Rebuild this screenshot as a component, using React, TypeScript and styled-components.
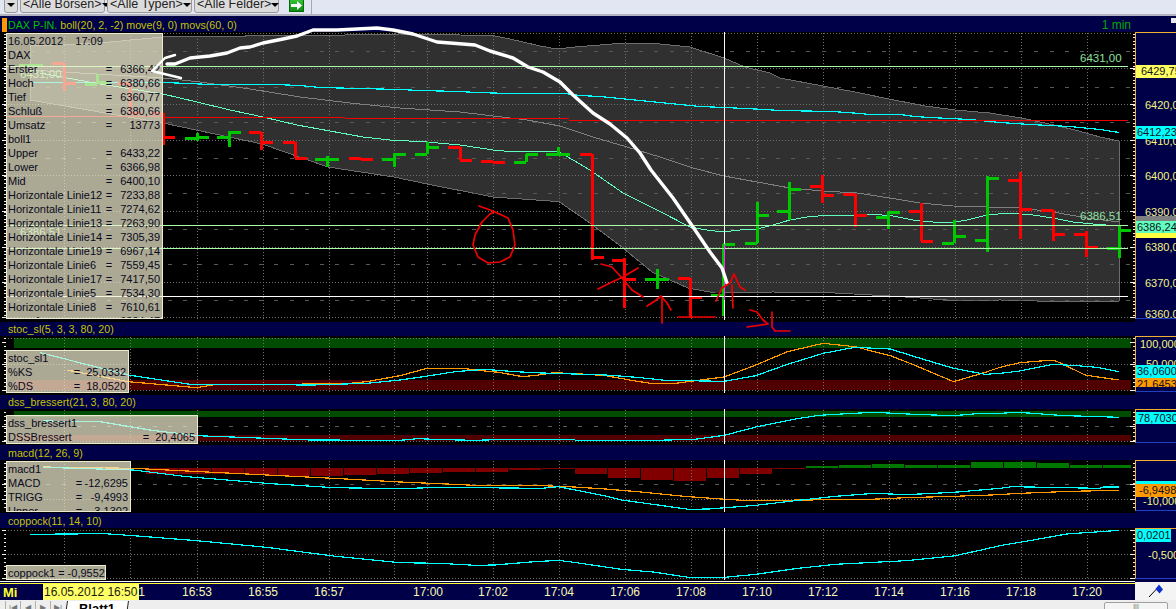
import styled, { createGlobalStyle } from 'styled-components';

type Pt = number[];

const GlobalStyle = createGlobalStyle`
    html, body {
        margin: 0;
        padding: 0;
        background: #000048;
    }
`;

const FONT = `"Liberation Sans", Arial, sans-serif`;
const GRID_X = [64, 130, 197, 263, 329, 394, 427, 493, 559, 625, 691, 757, 823, 889, 955, 1021, 1087];
const CROSS_X = 724.5;
const CYAN = '#00ffff';
const ORANGE = '#ff9900';
const MINT = '#60ffc0';
const PALE = '#a8ffa8';

// values were read off zoomed crops, so convert them back to page coordinates
const wide = (list: Pt[]) => list.map(([x, y]) => [400 + x / 2.529, 335 + y / 3]);
const right = (list: Pt[]) => list.map(([x, y]) => [1000 + x / 3, 330 + y / 3]);
const left = (list: Pt[]) => list.map(([x, y]) => [x / 3, 340 + y / 3]);
const points = (list: Pt[]) => list.map((p) => p.join(',')).join(' ');

const Page = styled.div`
    position: relative;
    width: 1176px;
    height: 609px;
    overflow: hidden;
    background: #000048;
    font-family: ${FONT};
    display: flex;
    flex-direction: column;
`;

const Toolbar = styled.div`
    flex: none;
    height: 14px;
    box-sizing: content-box;
    padding-left: 4px;
    display: flex;
    align-items: flex-end;
    gap: 2px;
    overflow: hidden;
    background: #e2e5f2;
    border-bottom: 2px solid #b4b4c0;
    margin-bottom: 2px;
`;

const Dropdown = styled.div<{ $w: number }>`
    flex: none;
    width: ${(p) => p.$w}px;
    height: 20px;
    margin-bottom: 1px;
    box-sizing: border-box;
    padding: 0 3px 0 2px;
    display: flex;
    align-items: flex-end;
    justify-content: space-between;
    background: #dcdcdc;
    border: 1px solid #9a9a9a;
    border-radius: 3px;
    color: #222;
    font-size: 12.5px;
    line-height: 12px;
    white-space: nowrap;
    span:first-child {
        position: relative;
        top: -2px;
    }
`;

const Caret = styled.i`
    flex: none;
    width: 0;
    height: 0;
    margin-bottom: 5px;
    border-left: 4px solid transparent;
    border-right: 4px solid transparent;
    border-top: 4px solid #000;
`;

const GoButton = styled.div`
    flex: none;
    width: 15px;
    height: 13px;
    margin: 0 5px 2px 8px;
    display: flex;
    align-items: center;
    justify-content: center;
    background: linear-gradient(#36c236, #0d8f12);
    border: 1px solid #0a6a0a;
    box-sizing: border-box;
`;

const ToolbarRule = styled.div`
    flex: none;
    width: 1px;
    height: 14px;
    background: #a8a8b4;
`;

const PaneHeader = styled.div<{ $h: number }>`
    flex: none;
    height: ${(p) => p.$h}px;
    position: relative;
    display: flex;
    align-items: center;
    padding-left: 8px;
    background: #000048;
    color: #c4c400;
    font-size: 10.7px;
    white-space: pre;
`;

const HeaderMark = styled.i`
    position: absolute;
    left: 2px;
    top: 0;
    width: 5px;
    height: 14px;
    background: #ff9900;
`;

const Instrument = styled.span`
    color: #00c000;
    margin-right: 3px;
`;

const TimeFrame = styled.span`
    margin-left: auto;
    margin-right: 45px;
    color: #00a800;
    font-size: 12px;
`;

const HeaderGrip = styled.i`
    position: absolute;
    right: 0;
    top: 0;
    width: 5px;
    height: 5px;
    background: #e8e8e8;
`;

const PaneBody = styled.div<{ $h: number }>`
    flex: none;
    height: ${(p) => p.$h}px;
    position: relative;
    display: flex;
    background: #000;
`;

const Plot = styled.svg`
    flex: none;
    display: block;
    width: 1135px;
    height: 100%;
`;

const Axis = styled.div<{ $h: number }>`
    flex: none;
    width: 41px;
    height: ${(p) => p.$h}px;
    box-sizing: border-box;
    position: relative;
    overflow: hidden;
    background: #000048;
    border-left: 1px solid #f0b030;
    border-top: 1px solid #f0b030;
    border-bottom: 1px solid #2040c0;
    box-shadow: 0 3px 0 #000048;
`;

const AxisLabel = styled.div<{ $top: number; $left: number }>`
    position: absolute;
    top: ${(p) => p.$top}px;
    left: ${(p) => p.$left}px;
    color: #f4f480;
    font-size: 11px;
    line-height: 14px;
    white-space: nowrap;
`;

const AxisTag = styled.div<{ $top: number; $bg: string; $h?: number; $w?: number; $pad?: number }>`
    position: absolute;
    top: ${(p) => p.$top}px;
    left: 0;
    width: ${(p) => p.$w ?? 40}px;
    height: ${(p) => p.$h ?? 13}px;
    padding-left: ${(p) => p.$pad ?? 1}px;
    box-sizing: border-box;
    overflow: hidden;
    background: ${(p) => p.$bg};
    color: #10101c;
    font-size: 11px;
    line-height: 13px;
    white-space: nowrap;
`;

const Legend = styled.div<{ $top: number; $w: number; $h: number }>`
    position: absolute;
    left: 6px;
    top: ${(p) => p.$top}px;
    width: ${(p) => p.$w}px;
    height: ${(p) => p.$h}px;
    box-sizing: border-box;
    overflow: hidden;
    padding: 0 2px 0 1px;
    border: 1px solid #ecebd0;
    background: rgba(243, 240, 210, 0.7);
    color: #0a0a20;
    font-size: 11px;
    line-height: 14px;
`;

const LegendRow = styled.div<{ $value: number; $eq?: number }>`
    display: grid;
    grid-template-columns: 1fr ${(p) => p.$eq ?? 10}px ${(p) => p.$value}px;
    height: 14px;
    white-space: nowrap;
    b {
        font-weight: normal;
        text-align: center;
    }
    em {
        font-style: normal;
        text-align: right;
    }
`;

const BottomAxis = styled.div`
    flex: none;
    height: 19px;
    display: flex;
`;

const TimeScale = styled.div`
    position: relative;
    flex: none;
    width: 1135px;
    box-sizing: border-box;
    padding: 3px 0 0 115px;
    display: flex;
    background: #000048;
    border-top: 1px solid #ffffff;
    box-shadow: inset 0 1px 0 #000048, inset 0 2px 0 #ffff30;
    color: #f8f8b0;
    font-size: 12px;
    line-height: 15px;
`;

const DayName = styled.b`
    position: absolute;
    left: 3px;
    top: 3px;
    color: #ffff30;
    font-size: 13px;
`;

const DateBox = styled.div`
    position: absolute;
    left: 43px;
    top: 2px;
    width: 96px;
    height: 16px;
    padding-left: 1px;
    box-sizing: border-box;
    background: #ffff66;
    color: #1c1c10;
    font-size: 12px;
    line-height: 16px;
`;

const TimeCell = styled.span<{ $w: number }>`
    flex: none;
    width: ${(p) => p.$w}px;
`;

const PenBox = styled.div`
    flex: 1;
    display: flex;
    align-items: center;
    justify-content: center;
    background: #f4f4f4;
`;

const SheetBar = styled.div`
    flex: none;
    height: 9px;
    display: flex;
    align-items: flex-start;
    padding: 1px 8px 0 5px;
    background: #eeeeee;
    overflow: hidden;
`;

const SheetNav = styled.div`
    flex: none;
    width: 15px;
    height: 14px;
    display: flex;
    justify-content: center;
    padding-top: 2px;
    box-sizing: border-box;
    border-left: 1px solid #b0b0b0;
    color: #777;
    font-size: 8px;
    line-height: 9px;
`;

const SheetTab = styled.div`
    flex: none;
    width: 60px;
    margin-left: 1px;
    padding-top: 1px;
    border-left: 1px solid #222;
    border-right: 1px solid #222;
    transform: skewX(-8deg);
    text-align: center;
    color: #000;
    font-size: 13px;
    font-weight: bold;
    line-height: 13px;
    background: #fff;
    span {
        display: inline-block;
        transform: skewX(8deg);
    }
`;

const SheetScroll = styled.div`
    margin-left: auto;
    flex: none;
    width: 64px;
    height: 14px;
    margin-top: 1px;
    text-align: center;
    box-sizing: border-box;
    border: 1px solid #a0a0a0;
    border-radius: 2px;
    background: #f4f4f4;
    color: #555;
    font-size: 7px;
    line-height: 7px;
`;

const Overlay = styled.svg`
    position: absolute;
    left: 0;
    top: 0;
    width: 1176px;
    height: 609px;
    pointer-events: none;
`;

const range = (from: number, to: number, step: number) => {
    const out: number[] = [];
    for (let v = from; v <= to; v += step) out.push(v);
    return out;
};

const Grid = ({ top, bottom, dotted, dashed }: { top: number; bottom: number; dotted: number[]; dashed: number[] }) => (
    <g shapeRendering="crispEdges">
        {GRID_X.map((x) => (
            <line key={x} x1={x + 0.5} x2={x + 0.5} y1={top} y2={bottom} stroke="#707070" strokeDasharray="1 2" />
        ))}
        {dotted.map((y) => (
            <line key={y} x1={8} x2={1131} y1={y + 0.5} y2={y + 0.5} stroke="#707070" strokeDasharray="1 2" />
        ))}
        {dashed.map((y) => (
            <line key={y} x1={16} x2={1131} y1={y + 0.5} y2={y + 0.5} stroke="#585858" strokeDasharray="4 11.2" />
        ))}
    </g>
);

const EdgeTicks = ({ top, bottom, step, major }: { top: number; bottom: number; step: number; major: number[] }) => (
    <g shapeRendering="crispEdges" stroke="#f0f0f0">
        {range(top, bottom, step).map((y) => (
            <g key={y}>
                <line x1={4} x2={6} y1={y} y2={y} />
                <line x1={1133} x2={1135} y1={y} y2={y} />
            </g>
        ))}
        {major.map((y) => (
            <g key={y}>
                <line x1={2} x2={6} y1={y + 0.5} y2={y + 0.5} />
                <line x1={1130} x2={1135} y1={y + 0.5} y2={y + 0.5} />
            </g>
        ))}
    </g>
);

const Cross = ({ top, bottom }: { top: number; bottom: number }) => (
    <line x1={CROSS_X} x2={CROSS_X} y1={top} y2={bottom} stroke="#f8f8f8" strokeWidth={1} shapeRendering="crispEdges" />
);

const Trace = ({ data, color, width = 1.2 }: { data: Pt[]; color: string; width?: number }) => (
    <polyline points={points(data)} fill="none" stroke={color} strokeWidth={width} shapeRendering="crispEdges" />
);

const bandTop: Pt[] = [[30, 46], [100, 43], [163, 37], [178, 36], [245, 36], [245, 35], [345, 35], [400, 34], [460, 35], [495, 36], [510, 39], [540, 46], [557, 49], [575, 47], [600, 45], [625, 43], [660, 44], [690, 47], [724, 58], [745, 67], [770, 73], [780, 78], [823, 86], [855, 92], [889, 99], [925, 106], [955, 110], [990, 113], [1021, 118], [1045, 123], [1075, 130], [1100, 137], [1119, 141]];
const bandBottom: Pt[] = [[1119, 301], [1070, 302], [1037, 301], [1000, 300], [960, 301], [920, 298], [890, 296], [835, 293], [773, 292], [724, 293], [715, 293], [688, 288], [652, 272], [623, 248], [590, 223], [558, 201], [550, 201], [493, 197], [427, 184], [394, 177], [328, 167], [262, 144], [163, 123], [30, 100]];
const bollMid: Pt[] = [[30, 70], [163, 78], [200, 82], [250, 89], [300, 97], [350, 103], [400, 108], [460, 112], [493, 116], [527, 120], [560, 126], [593, 137], [627, 147], [660, 157], [693, 168], [724, 176], [757, 182], [790, 188], [823, 191], [857, 193], [890, 198], [920, 203], [953, 206], [987, 207], [1020, 208], [1053, 212], [1087, 218], [1119, 222]];
const moveLine: Pt[] = [[33, 82.5], [163, 82.5], [190, 83.5], [210, 84.5], [275, 84.5], [300, 85.5], [320, 87.5], [360, 88.5], [400, 89.5], [420, 90.5], [460, 91.5], [476, 92.5], [510, 93.5], [565, 93.5], [580, 95.5], [600, 96.5], [620, 98.5], [640, 100.5], [660, 102.5], [680, 104.5], [700, 106.5], [724, 107.5], [745, 108.5], [765, 109.5], [780, 110.5], [832, 111.5], [860, 113.5], [870, 114.5], [900, 114.5], [915, 116.5], [930, 117.5], [950, 118.5], [970, 119.5], [1000, 122.5], [1030, 124.5], [1050, 125.5], [1070, 126.5], [1080, 127.5], [1100, 129.5], [1119, 132.5]];
const movsLine: Pt[] = [[40, 73], [100, 84], [163, 94], [197, 102], [230, 110], [263, 117], [297, 125], [330, 131], [363, 137], [390, 140], [427, 142], [460, 145], [480, 148], [493, 150], [509, 151.5], [558, 151.5], [573, 160], [590, 170], [623, 193], [657, 210], [690, 227], [707, 230], [723, 232], [740, 230], [757, 229], [773, 225], [790, 220], [807, 217], [823, 215.5], [853, 215.5], [873, 214.5], [890, 215.5], [913, 220], [933, 222], [950, 223], [967, 220], [987, 215], [1010, 213], [1033, 215], [1053, 218], [1073, 222], [1093, 224], [1119, 226]];
// the red level steps down a pixel at a time: x from, x to, y
const redLevel: number[][] = [[6, 163, 116.5], [163, 345, 117.5], [345, 569, 118.5], [569, 1128, 120.5]];

// x, open, close, high, low
const greenBars: number[][] = [
    [31, 65, 65, 65, 65], [97, 84, 82, 74, 84], [197, 138, 137, 133, 141], [229, 137, 132, 131, 147], [327, 159, 159, 156, 167],
    [394, 159, 154, 153, 167], [427, 154, 147, 142, 154], [526, 162, 154, 154, 162], [558, 154, 154, 147, 155], [657, 279, 279, 269, 289],
    [723, 295, 244, 244, 316], [757, 243, 215, 202, 243], [789, 211, 189, 182, 220], [888, 217, 212, 212, 229], [954, 243, 236, 220, 243],
    [987, 240, 178, 176, 252], [1119, 248, 230, 226, 258],
];
const redBars: number[][] = [
    [64, 63, 83, 63, 91], [130, 83, 113, 83, 115], [163, 113, 137, 113, 145], [261, 132, 142, 132, 150], [295, 142, 158, 142, 158],
    [361, 158, 159, 158, 159], [460, 147, 160, 147, 160], [493, 161, 162, 161, 162], [592, 154, 257, 154, 260], [624, 260, 279, 258, 308],
    [690, 278, 297, 278, 318], [822, 186, 195, 175, 203], [855, 194, 215, 194, 227], [921, 211, 241, 203, 241], [1020, 180, 209, 172, 239],
    [1053, 210, 234, 210, 241], [1086, 234, 247, 231, 257],
];

const Bars = ({ data, color }: { data: number[][]; color: string }) => (
    <g stroke={color} strokeWidth={3} shapeRendering="crispEdges">
        {data.map(([x, open, close, high, low]) => (
            <g key={x}>
                <line x1={x} x2={x} y1={high} y2={low} />
                <line x1={x - 12} x2={x} y1={open} y2={open} />
                <line x1={x} x2={x + 12} y1={close} y2={close} />
            </g>
        ))}
    </g>
);

const macdBars: number[][] = [
    [146, 474], [179, 474], [212, 474], [245, 475], [278, 476], [311, 476], [344, 475], [377, 474], [410, 473], [443, 472],
    [476, 472], [509, 470], [542, 469], [575, 474], [608, 478], [641, 480], [674, 481], [707, 478], [740, 474], [773, 469],
    [806, 466], [839, 465], [872, 464], [905, 465], [938, 465], [971, 462], [1004, 462], [1037, 463], [1070, 465], [1103, 465],
];

const stocOrange = [
    ...left([[200, 90], [385, 125], [590, 143], [650, 133], [1030, 132], [1100, 125]]),
    ...wide([[0, 122], [65, 101], [165, 101], [190, 105], [250, 112], [310, 125], [345, 121], [390, 113], [460, 117], [520, 122], [600, 139], [640, 146], [690, 146], [760, 135], [820, 126], [900, 90], [980, 50], [1070, 25], [1150, 35], [1240, 62], [1300, 90], [1400, 140], [1480, 112]]),
    ...right([[0, 112], [60, 98], [135, 92], [165, 92], [190, 103], [255, 135], [300, 142], [358, 150]]),
];
const stocCyan = [
    ...left([[120, 38], [385, 105], [570, 133], [940, 135], [1100, 130]]),
    ...wide([[0, 135], [65, 124], [140, 110], [215, 103], [290, 110], [360, 114], [520, 120], [600, 127], [670, 136], [820, 139], [900, 122], [980, 88], [1070, 55], [1150, 37], [1240, 42], [1310, 68], [1400, 100], [1480, 118]]),
    ...right([[0, 130], [60, 123], [160, 103], [230, 107], [290, 112], [358, 125]]),
];
const dssCyan = [
    ...left([[130, 243], [300, 245], [450, 270], [590, 287], [800, 295], [930, 300]]),
    ...wide([[0, 316], [45, 311], [110, 314], [190, 316], [275, 313], [440, 313], [445, 317], [610, 317], [745, 313], [820, 301], [900, 276], [1000, 252], [1060, 241], [1130, 236], [1200, 232], [1300, 238], [1400, 242], [1470, 235]]),
    ...right([[0, 250], [50, 247], [100, 250], [150, 254], [200, 257], [300, 260], [358, 262]]),
];
const macdOrange = [
    ...left([[130, 381], [400, 385], [560, 393], [800, 405], [1000, 415]]),
    ...wide([[0, 441], [100, 446], [190, 451], [360, 452], [440, 456], [520, 462], [600, 470], [720, 484], [800, 491], [880, 497], [1020, 495], [1190, 493], [1280, 488], [1400, 484]]),
    ...right([[0, 494], [40, 491], [110, 488], [210, 484], [310, 482], [358, 481]]),
];
const macdCyan = [
    ...left([[130, 382], [400, 390], [560, 410], [800, 430], [1000, 443]]),
    ...wide([[0, 461], [100, 457], [360, 460], [400, 455], [520, 483], [560, 495], [640, 508], [730, 523], [780, 522], [900, 511], [1000, 497], [1100, 484], [1200, 475], [1280, 479], [1400, 472]]),
    ...right([[0, 475], [35, 470], [300, 475], [310, 471], [358, 471]]),
];
const coppockCyan = [
    ...left([[90, 583], [315, 581], [400, 587], [590, 602], [800, 622], [1000, 648]]),
    ...wide([[0, 683], [100, 685], [190, 691], [240, 690], [330, 681], [400, 676], [440, 682], [560, 703], [640, 711], [730, 727], [820, 727], [900, 718], [1000, 701], [1100, 688], [1280, 677], [1400, 663], [1470, 645]]),
    ...right([[0, 647], [100, 630], [200, 612], [358, 601]]),
];

const mainRows: [string, string][] = [
    ['Erster', '6366,42'], ['Hoch', '6380,66'], ['Tief', '6360,77'], ['Schluß', '6380,66'], ['Umsatz', '13773'],
];
const mainLevels: [string, string][] = [
    ['Upper', '6433,22'], ['Lower', '6366,98'], ['Mid', '6400,10'], ['Horizontale Linie12', '7233,88'], ['Horizontale Linie11', '7274,62'],
    ['Horizontale Linie13', '7263,90'], ['Horizontale Linie14', '7305,39'], ['Horizontale Linie19', '6967,14'], ['Horizontale Linie6', '7559,45'],
    ['Horizontale Linie17', '7417,50'], ['Horizontale Linie5', '7534,30'], ['Horizontale Linie8', '7610,61'], ['move1', '6384,47'],
];

const times: [string, number][] = [
    ['16:51', 67], ['16:53', 66], ['16:55', 66], ['16:57', 99], ['17:00', 65], ['17:02', 66], ['17:04', 66], ['17:06', 66],
    ['17:08', 66], ['17:10', 66], ['17:12', 66], ['17:14', 66], ['17:16', 66], ['17:18', 66], ['17:20', 66],
];

const Row = ({ name, value, width = 46 }: { name: string; value: string; width?: number }) => (
    <LegendRow $value={width}>
        <span>{name}</span>
        <b>=</b>
        <em>{value}</em>
    </LegendRow>
);

const MainPlot = () => (
    <Plot viewBox="0 32 1135 290" preserveAspectRatio="none">
        <polygon points={points([...bandTop, ...bandBottom])} fill="#303030" stroke="#6c6c6c" shapeRendering="crispEdges" />
        <Grid top={33} bottom={320} dotted={[33, 68, 104, 140, 175, 211, 247, 282, 317]} dashed={[51, 87, 122, 158, 193, 229, 264, 300]} />
        <EdgeTicks top={34} bottom={318} step={3.56} major={[68, 104, 140, 175, 211, 247, 282, 317]} />
        <Trace data={bollMid} color="#808080" width={1} />
        <Trace data={moveLine} color={CYAN} />
        <Trace data={movsLine} color={MINT} width={1} />
        <g stroke="#f00000" strokeWidth={1} shapeRendering="crispEdges">
            {redLevel.map(([from, to, y]) => <line key={from} x1={from} x2={to} y1={y} y2={y} />)}
        </g>
        <Bars data={redBars} color="#ff0000" />
        <Bars data={greenBars} color="#00c800" />
        <g shapeRendering="crispEdges" strokeWidth={1}>
            <line x1={6} x2={1128} y1={66.5} y2={66.5} stroke={PALE} />
            <line x1={6} x2={1128} y1={225.5} y2={225.5} stroke={PALE} />
            <line x1={6} x2={1128} y1={248.5} y2={248.5} stroke={PALE} />
            <line x1={6} x2={1128} y1={296.5} y2={296.5} stroke="#ffffff" />
        </g>
        <g fill="#8fe0a0" fontFamily={FONT} fontSize={11.5}>
            <text x={1080} y={62}>6431,00</text>
            <text x={1080} y={220}>6386,51</text>
            <text x={20} y={78}>6431,00</text>
            <text x={20} y={236}>6386,51</text>
        </g>
        <Cross top={32} bottom={244} />
        <line x1={CROSS_X} x2={CROSS_X} y1={244} y2={300} stroke="#ff30ff" strokeWidth={1.5} shapeRendering="crispEdges" />
        <Cross top={300} bottom={320} />
    </Plot>
);

const ToolbarRow = () => (
    <Toolbar>
        <Dropdown $w={14}><Caret /></Dropdown>
        <Dropdown $w={85}><span>&lt;Alle Börsen&gt;</span><Caret /></Dropdown>
        <Dropdown $w={85}><span>&lt;Alle Typen&gt;</span><Caret /></Dropdown>
        <Dropdown $w={85}><span>&lt;Alle Felder&gt;</span><Caret /></Dropdown>
        <GoButton>
            <svg width="11" height="9" viewBox="0 0 11 9">
                <path d="M0 3h6V0l5 4.5L6 9V6H0z" fill="#fff" />
            </svg>
        </GoButton>
        <ToolbarRule />
    </Toolbar>
);

const Annotations = () => (
    <Overlay viewBox="0 0 1176 609">
        <g fill="none" stroke="#ffffff" strokeLinecap="round" strokeLinejoin="round">
            <path strokeWidth={2.4} d="M175 55 165 58 152 71 181 78" />
            <polyline strokeWidth={3.4} points="167,64 175,64 190,58 210,56 227,53 240,48 250,47 263,43 283,39 297,36 313,30 337,30 357,29 377,28 393,30 413,34 437,42 450,43 475,45 490,51 513,58 528,67 543,72 560,82 573,95 593,113 610,124 627,138 640,153 651,170 673,198 693,227 710,252 722,268 727,283" />
        </g>
        <g fill="none" stroke="#f00000" strokeWidth={1.7} strokeLinecap="round" strokeLinejoin="round">
            <polyline points="479,206 493,211 508,218 513,230 515,245 510,257 500,262 488,263 478,257 473,245 475,235 482,222 490,214 494,212" />
            <polyline points="601,264 612,267 622,278 632,290 643,297" />
            <polyline points="598,289 612,282 623,277 638,268" />
            <polyline points="647,306 655,301 661,296 667,303 671,310" />
            <polyline points="662,298 662,323" />
            <polyline points="678,317 715,317" />
            <polyline points="716,301 722,288 730,283 734,274 740,287 745,290" />
            <polyline points="732,285 733,308" />
            <polyline points="750,310 757,312 763,320 768,324 747,327" />
            <polyline points="772,312 772,327 775,331 790,331" />
        </g>
    </Overlay>
);

export default function App() {
    return (
        <Page>
            <GlobalStyle />
            <ToolbarRow />

            <PaneHeader $h={14}>
                <HeaderMark />
                <Instrument>DAX P-IN.</Instrument>
                boll(20, 2, -2) move(9, 0) movs(60, 0)
                <TimeFrame>1 min</TimeFrame>
                <HeaderGrip />
            </PaneHeader>
            <PaneBody $h={290}>
                <MainPlot />
                <Axis $h={287}>
                    <AxisTag $top={32} $bg="#ffff60" $pad={5}>6429,75</AxisTag>
                    <AxisLabel $top={65} $left={9}>6420,00</AxisLabel>
                    <AxisLabel $top={101} $left={9}>6410,00</AxisLabel>
                    <AxisTag $top={93} $bg={CYAN}>6412,23</AxisTag>
                    <AxisLabel $top={136} $left={9}>6400,00</AxisLabel>
                    <AxisLabel $top={172} $left={9}>6390,00</AxisLabel>
                    <AxisTag $top={183} $bg="#808080" $h={6}> </AxisTag>
                    <AxisTag $top={199} $bg="#ffff40" $h={6}><span /></AxisTag>
                    <AxisTag $top={188} $bg={MINT} $h={12}>6386,24</AxisTag>
                    <AxisLabel $top={207} $left={9}>6380,00</AxisLabel>
                    <AxisLabel $top={243} $left={9}>6370,00</AxisLabel>
                    <AxisLabel $top={274} $left={9}>6360,00</AxisLabel>
                </Axis>
                <Legend $top={1} $w={157} $h={286}>
                    <LegendRow $value={0} $eq={0}><span>16.05.2012&nbsp;&nbsp;&nbsp;&nbsp;17:09</span></LegendRow>
                    <LegendRow $value={0} $eq={0}><span>DAX</span></LegendRow>
                    {mainRows.map(([name, value]) => <Row key={name} name={name} value={value} />)}
                    <LegendRow $value={0} $eq={0}><span>boll1</span></LegendRow>
                    {mainLevels.map(([name, value]) => <Row key={name} name={name} value={value} />)}
                </Legend>
            </PaneBody>

            <PaneHeader $h={14}>stoc_sl(5, 3, 3, 80, 20)</PaneHeader>
            <PaneBody $h={59}>
                <Plot viewBox="0 336 1135 59" preserveAspectRatio="none">
                    <g shapeRendering="crispEdges">
                        <rect x={14} y={338} width={1117} height={10} fill="#004c00" />
                        <rect x={14} y={380} width={1117} height={10} fill="#500000" />
                    </g>
                    <Grid top={337} bottom={394} dotted={[338, 364, 390]} dashed={[]} />
                    <EdgeTicks top={338} bottom={392} step={4} major={[342, 364, 390]} />
                    <Trace data={stocOrange} color={ORANGE} />
                    <Trace data={stocCyan} color={CYAN} />
                    <Cross top={336} bottom={393} />
                </Plot>
                <Axis $h={56}>
                    <AxisLabel $top={0} $left={4}>100,000</AxisLabel>
                    <AxisLabel $top={20} $left={10}>50,000</AxisLabel>
                    <AxisTag $top={41} $bg={ORANGE} $h={9}>21,6453</AxisTag>
                    <AxisTag $top={28} $bg={CYAN}>36,0600</AxisTag>
                </Axis>
                <Legend $top={14} $w={123} $h={43}>
                    <LegendRow $value={0} $eq={0}><span>stoc_sl1</span></LegendRow>
                    <Row name="%KS" value="25,0332" width={44} />
                    <Row name="%DS" value="18,0520" width={44} />
                </Legend>
            </PaneBody>

            <PaneHeader $h={14}>dss_bressert(21, 3, 80, 20)</PaneHeader>
            <PaneBody $h={36}>
                <Plot viewBox="0 409 1135 36" preserveAspectRatio="none">
                    <g shapeRendering="crispEdges">
                        <rect x={14} y={411} width={1117} height={6} fill="#004c00" />
                        <rect x={14} y={435} width={1117} height={6} fill="#500000" />
                    </g>
                    <Grid top={410} bottom={444} dotted={[441]} dashed={[426]} />
                    <EdgeTicks top={412} bottom={442} step={4} major={[426, 441]} />
                    <Trace data={dssCyan} color={CYAN} />
                    <Cross top={409} bottom={444} />
                </Plot>
                <Axis $h={34}>
                    <AxisTag $top={2} $bg={CYAN} $h={12} $pad={2}>78,7030</AxisTag>
                </Axis>
                <Legend $top={6} $w={192} $h={29}>
                    <LegendRow $value={0} $eq={0}><span>dss_bressert1</span></LegendRow>
                    <LegendRow $value={44}><span>DSSBressert</span><b>=</b><em>20,4065</em></LegendRow>
                </Legend>
            </PaneBody>

            <PaneHeader $h={15}>macd(12, 26, 9)</PaneHeader>
            <PaneBody $h={53}>
                <Plot viewBox="0 460 1135 53" preserveAspectRatio="none">
                    <g shapeRendering="crispEdges">
                        {macdBars.map(([x, y]) => (y >= 468
                            ? <rect key={x} x={x} y={468} width={32} height={y - 468} fill="#800000" />
                            : <rect key={x} x={x} y={y} width={x === 1103 ? 28 : 32} height={468 - y} fill="#007800" />
                        ))}
                    </g>
                    <Grid top={461} bottom={512} dotted={[499]} dashed={[484]} />
                    <EdgeTicks top={463} bottom={510} step={4} major={[484, 499]} />
                    <Trace data={macdOrange} color={ORANGE} />
                    <Trace data={macdCyan} color={CYAN} />
                    <Cross top={460} bottom={512} />
                </Plot>
                <Axis $h={51}>
                    <AxisLabel $top={33} $left={7}>-10,000</AxisLabel>
                    <AxisTag $top={20} $bg={CYAN} $h={4}> </AxisTag>
                    <AxisTag $top={23} $bg={ORANGE} $pad={3}>-6,9498</AxisTag>
                </Axis>
                <Legend $top={1} $w={125} $h={51}>
                    <LegendRow $value={0} $eq={0}><span>macd1</span></LegendRow>
                    <Row name="MACD" value="-12,6295" width={44} />
                    <Row name="TRIGG" value="-9,4993" width={44} />
                    <Row name="Upper" value="-3,1302" width={44} />
                </Legend>
            </PaneBody>

            <PaneHeader $h={15}>coppock(11, 14, 10)</PaneHeader>
            <PaneBody $h={53}>
                <Plot viewBox="0 528 1135 53" preserveAspectRatio="none">
                    <Grid top={529} bottom={580} dotted={[530, 554, 578]} dashed={[]} />
                    <EdgeTicks top={530} bottom={578} step={4} major={[530, 554, 578]} />
                    <Trace data={coppockCyan} color={CYAN} />
                    <Cross top={528} bottom={580} />
                </Plot>
                <Axis $h={51}>
                    <AxisTag $top={0} $bg={CYAN} $w={35} $h={13}>0,0201</AxisTag>
                    <AxisLabel $top={19} $left={12}>-0,500</AxisLabel>
                </Axis>
                <Legend $top={37} $w={100} $h={15}>
                    <LegendRow $value={0} $eq={0}><span>coppock1 = -0,9552</span></LegendRow>
                </Legend>
            </PaneBody>

            <BottomAxis>
                <TimeScale>
                    <DayName>Mi</DayName>
                    {times.map(([label, w]) => <TimeCell key={label} $w={w}>{label}</TimeCell>)}
                    <DateBox>16.05.2012 16:50</DateBox>
                </TimeScale>
                <PenBox>
                    <svg width="16" height="15" viewBox="0 0 16 15">
                        <path d="M1 14 10 4.5" stroke="#000" strokeWidth={1} fill="none" />
                        <path d="M11 1.5 15 6.5 11.5 10.5 7.5 6z" fill="#1030c8" />
                    </svg>
                </PenBox>
            </BottomAxis>

            <SheetBar>
                <SheetNav>|◀</SheetNav>
                <SheetNav>◀</SheetNav>
                <SheetNav>▶</SheetNav>
                <SheetNav>▶|</SheetNav>
                <SheetTab><span>Blatt1</span></SheetTab>
                <SheetScroll>|||</SheetScroll>
            </SheetBar>

            <Annotations />
        </Page>
    );
}
